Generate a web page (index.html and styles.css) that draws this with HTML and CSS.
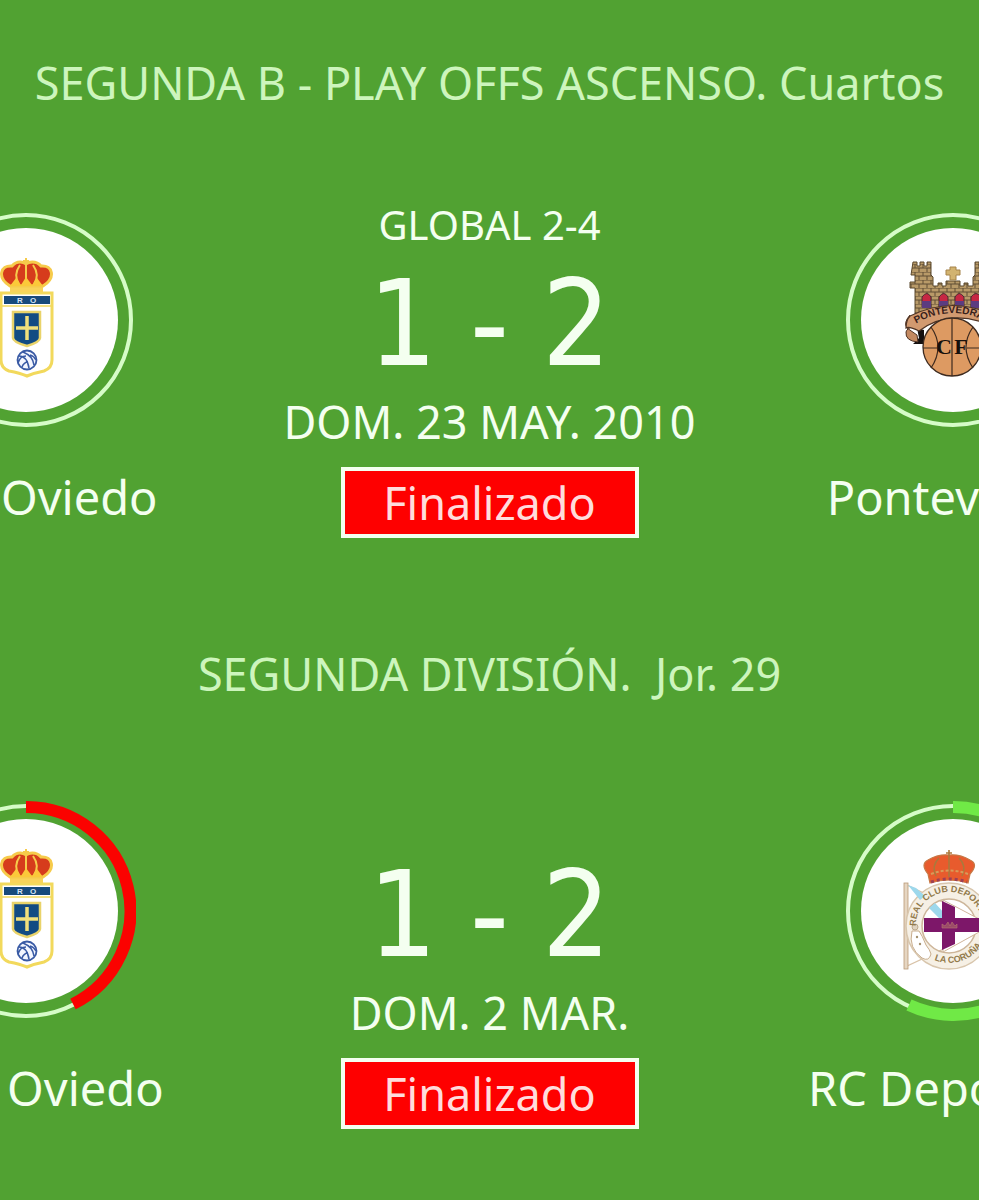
FILE: index.html
```html
<!DOCTYPE html>
<html lang="es">
<head>
  <meta charset="UTF-8">
  <meta name="viewport" content="width=device-width, initial-scale=1.0">
  <title>Resultados</title>
  <link rel="stylesheet" href="styles.css">
</head>
<body>

  <!-- Shared crest -->
  <svg class="defs" width="0" height="0" aria-hidden="true">
    <symbol id="oviedo" viewBox="-110 -110 220 220">
      <path d="M-25 -27H26V40Q26 48 18 51Q8 53 1 56Q-6 53 -17 51Q-25 48 -25 40Z" fill="#fff" stroke="#f2d95c" stroke-width="3"/>
      <path d="M-16 -37H17V-28H-16Z" fill="#f8d45a"/>
      <path d="M-16 -34C-29 -42 -26 -55 -14 -54C-9 -60 -2 -58 0 -56C2 -58 10 -60 15 -54C27 -55 30 -42 17 -34Z" fill="#d63c1c" stroke="#f6cb4b" stroke-width="3"/>
      <path d="M-6 -55Q-13 -45 -7 -36M7 -55Q14 -45 8 -36M0 -62V-36M-3 -59H3" fill="none" stroke="#f6cb4b" stroke-width="2"/>
      <path d="M-16 -34L-10 -42L-5 -35L0 -43L6 -35L11 -42L17 -34Z" fill="#fbc93a"/>
      <rect x="-22" y="-24" width="46" height="8" fill="#174a7c"/>
      <text x="-6" y="-17" class="crest-letter">R</text>
      <text x="7" y="-17" class="crest-letter">O</text>
      <path d="M-24 -14H25" stroke="#f2d95c" stroke-width="1.5"/>
      <path d="M-13 -8H14V18Q14 22 1 26Q-13 22 -13 18Z" fill="#124b83" stroke="#e9d36a" stroke-width="2.5"/>
      <path d="M1 -4V20M-10 8H12" stroke="#f1e07c" stroke-width="3.5"/>
      <circle cx="1" cy="40" r="9.5" fill="#f4f7ff" stroke="#3a5ba5" stroke-width="1.8"/>
      <path d="M-7 36Q1 36 3 48M-3 32Q7 36 8 45M-8 43Q-6 36 0 36M-4 47Q-2 42 2 42M4 35Q8 36 10 40" fill="none" stroke="#3a5ba5" stroke-width="1.6"/>
    </symbol>
  </svg>

  <main class="results">

    <section class="match">
      <h2 class="competition">SEGUNDA B - PLAY OFFS ASCENSO. Cuartos</h2>
      <div class="match-row">
        <div class="team">
          <svg class="crest" viewBox="-110 -110 220 220" role="img" aria-label="Real Oviedo">
            <circle class="ring" r="105"/>
            <circle class="disc" r="92"/>
            <use href="#oviedo" x="-110" y="-110" width="220" height="220"/>
          </svg>
          <p class="team-name">Real Oviedo</p>
        </div>

        <div class="info">
          <p class="aggregate">GLOBAL 2-4</p>
          <p class="score"><span>1</span><span>-</span><span>2</span></p>
          <p class="date">DOM. 23 MAY. 2010</p>
          <p class="status">Finalizado</p>
        </div>

        <div class="team">
          <svg class="crest" viewBox="-110 -110 220 220" role="img" aria-label="Pontevedra">
            <defs>
              <pattern id="stone" width="8" height="8" patternUnits="userSpaceOnUse">
                <rect width="8" height="8" fill="#b89a68"/>
                <path d="M0 0H8M0 4H8M2 0V4M6 4V8" stroke="#5f4d33" stroke-width="1"/>
              </pattern>
              <path id="ribbon-line" d="M-38 4Q0 -18 38 4"/>
            </defs>
            <circle class="ring" r="105"/>
            <circle class="disc" r="92"/>
            <!-- castle -->
            <path d="M-42 -45L-40 -58H-36V-54H-33V-58H-29V-54H-26V-58H-22V-45L-20 -43V-34H-15V-37H-11V-34H-7V-39H7V-34H11V-37H15V-34H20V-43L22 -45V-58H26V-54H29V-58H33V-54H36V-58H40L42 -45L40 -6H-38V-32H-43V-38H-38V-45Z" fill="url(#stone)" stroke="#5b482c" stroke-width="1"/>
            <path d="M-3 -53H3V-50H7V-45H3V-40H-3V-45H-7V-50H-3Z" fill="#d2b36f" stroke="#a5834a"/>
            <path d="M-31 -13V-23Q-26 -30 -22 -23V-13ZM-14 -13V-23Q-9 -30 -5 -23V-13ZM2 -13V-23Q6 -30 11 -23V-13ZM18 -13V-23Q23 -30 28 -23V-13Z" fill="#c62743" stroke="#4a2c31"/>
            <path d="M-31 -19H-22V-12H-31ZM-14 -19H-5V-12H-14ZM2 -19H11V-12H2ZM18 -19H28V-12H18Z" fill="#5b3c80"/>
            <!-- ribbon -->
            <path d="M-36 8L-29 10V24H-40L-34 18Z" fill="#151010"/>
            <path d="M-43 -5Q-50 3 -46 8L-36 15L-35 22Q-48 21 -47 12Q-46 8 -40 7" fill="#c48a61" stroke="#4f3425"/>
            <path d="M-43 -4Q0 -25 43 -4L46 9Q0 -14 -34 11Q-44 6 -47 8Q-47 0 -43 -4Z" fill="#d29a70" stroke="#4f3425" stroke-width="1.2"/>
            <text class="ribbon-text"><textPath href="#ribbon-line" startOffset="1">PONTEVEDRA</textPath></text>
            <!-- ball -->
            <circle cx="-1" cy="27" r="29" fill="#dd9a62" stroke="#3d2a1f" stroke-width="1.3"/>
            <path d="M-1 -2V56M-30 28H-16M14 28H28M-22 7Q-8 27 -22 48M20 7Q6 27 20 48" fill="none" stroke="#3d2a1f" stroke-width="1.2"/>
            <text x="-9" y="34" class="ball-letter">C</text>
            <text x="8" y="34" class="ball-letter">F</text>
          </svg>
          <p class="team-name">Pontevedra</p>
        </div>
      </div>
    </section>

    <section class="match">
      <h2 class="competition">SEGUNDA DIVISIÓN.&nbsp; Jor. 29</h2>
      <div class="match-row">
        <div class="team">
          <svg class="crest" viewBox="-110 -110 220 220" role="img" aria-label="Real Oviedo">
            <circle class="ring" r="105"/>
            <path class="arc arc-lost" d="M0 -104A104 104 0 0 1 47 93"/>
            <circle class="disc" r="92"/>
            <use href="#oviedo" x="-110" y="-110" width="220" height="220"/>
          </svg>
          <p class="team-name">Real&nbsp; Oviedo</p>
        </div>

        <div class="info">
          <p class="aggregate"></p>
          <p class="score"><span>1</span><span>-</span><span>2</span></p>
          <p class="date">DOM. 2 MAR.</p>
          <p class="status">Finalizado</p>
        </div>

        <div class="team">
          <svg class="crest" viewBox="-110 -110 220 220" role="img" aria-label="RC Deportivo">
            <defs>
              <path id="club-top" d="M-36 22A33 33 0 1 1 28 22"/>
              <path id="club-bottom" d="M-38 32A39 39 0 0 0 30 32"/>
            </defs>
            <circle class="ring" r="105"/>
            <path class="arc arc-won" d="M0 -104A104 104 0 1 1 -44 94"/>
            <circle class="disc" r="92"/>
            <!-- flag -->
            <path d="M-46 -26L40 15L-46 55Z" fill="#fff" stroke="#d9c3a8" stroke-width="1.2"/>
            <rect x="-49" y="-28" width="4" height="86" fill="#e6d6c2" stroke="#b99a77" stroke-width=".8"/>
            <!-- round badge -->
            <circle cx="-4" cy="15" r="35" fill="none" stroke="#f6f0e5" stroke-width="16"/>
            <circle cx="-4" cy="15" r="43" fill="none" stroke="#d8c6ad" stroke-width="1.5"/>
            <circle cx="-4" cy="15" r="27" fill="none" stroke="#cdb69a" stroke-width="1.5"/>
            <path d="M-45 -26L-37 -23L-28 -15L-33 -11ZM-24 -3L-18 -8L-8 3L-12 9Z" fill="#9dd8ec"/>
            <path d="M-10 -11L28 9V20L-10 41Z" fill="#fff" stroke="#d0b59b" stroke-width="1"/>
            <path d="M-11 -10L2 -4V33L-11 39ZM-29 7H30V21H-29Z" fill="#7d1769"/>
            <path d="M-11 17V13L-8 15L-5 11L-3 15L-1 11L2 15L4 13V17Z" fill="#9b4b68" stroke="#b8786f" stroke-width=".6"/>
            <path d="M-41 20Q-45 37 -31 47Q-24 51 -22 43Q-23 39 -27 34Q-31 24 -34 20Z" fill="#fff" stroke="#c8ad8d" stroke-width="1"/>
            <circle cx="-38" cy="16" r="3" fill="#dfd3c0" stroke="#bda88b"/>
            <circle cx="-36" cy="26" r="1.2" fill="#a4916f"/>
            <circle cx="-33" cy="33" r="1.2" fill="#a4916f"/>
            <text class="club-text"><textPath href="#club-top" startOffset="7">REAL CLUB DEPORTIVO</textPath></text>
            <text class="club-text"><textPath href="#club-bottom" startOffset="26">LA CORUÑA</textPath></text>
            <!-- crown -->
            <path d="M-23 -28L-25 -37Q-33 -47 -25 -51Q-15 -57 -4 -56Q7 -57 17 -51Q26 -47 17 -37L15 -28Q-4 -34 -23 -28Z" fill="#e85b2d" stroke="#c77845" stroke-width="1.2"/>
            <path d="M-14 -53Q-22 -45 -17 -35M6 -53Q14 -45 9 -35M-4 -61V-34M-7 -58H-1" fill="none" stroke="#aa793c" stroke-width="1.6"/>
            <path d="M-22 -37Q-4 -44 15 -37" fill="none" stroke="#d79b59" stroke-width="2" stroke-dasharray="3 2"/>
            <path d="M-22 -29Q-4 -35 14 -29" fill="none" stroke="#9d4055" stroke-width="3" stroke-dasharray="3 3"/>
          </svg>
          <p class="team-name">RC Deportivo</p>
        </div>
      </div>
    </section>

  </main>

</body>
</html>
```
FILE: styles.css
```css
* {
  box-sizing: border-box;
}

body {
  margin: 0;
  background-color: #fff;
  font-family: "Noto Sans", "Open Sans", sans-serif;
  color: #f4fff0;
}

h2,
p {
  margin: 0;
  font-weight: 400;
  white-space: nowrap;
}

.defs {
  position: absolute;
}

.results {
  min-height: 100vh;
  margin-right: 2px;
  background-color: #51a232;
  overflow: hidden;
}

.match {
  padding: 53px 0;
}

.competition {
  font-size: 45px;
  line-height: 60px;
  text-align: center;
  color: #cdf5bd;
}

/* The outer teams run past both edges of the screen */
.match-row {
  display: flex;
  justify-content: space-between;
  margin: 88px -154px 0;
}

.team {
  flex: 0 0 360px;
  display: flex;
  flex-direction: column;
  align-items: center;
  padding-top: 9px;
}

.crest {
  width: 220px;
  height: 220px;
}

.team-name {
  margin-top: 37px;
  font-size: 47px;
  line-height: 60px;
}

.info {
  display: flex;
  flex-direction: column;
  align-items: center;
}

.aggregate {
  height: 48px;
  font-size: 40px;
  line-height: 48px;
}

.score {
  display: flex;
  gap: 33px;
  margin-top: 15px;
  font-family: "DejaVu Sans Condensed", "DejaVu Sans", sans-serif;
  font-size: 120px;
  line-height: 120px;
}

.date {
  margin-top: 8px;
  font-size: 45px;
  line-height: 60px;
}

.status {
  width: 298px;
  margin-top: 15px;
  border: 4px solid #f4fff0;
  background-color: #fe0000;
  color: #ffdcdc;
  font-size: 45px;
  line-height: 63px;
  text-align: center;
}

.ring {
  fill: none;
  stroke: #d6fcc8;
  stroke-width: 4;
}

.disc {
  fill: #fff;
}

.arc {
  fill: none;
  stroke-width: 12;
}

.arc-lost {
  stroke: #fb0200;
}

.arc-won {
  stroke: #70e946;
}

.crest-letter {
  font: bold 8px "Liberation Sans", sans-serif;
  fill: #d5e3f3;
  text-anchor: middle;
}

.ribbon-text {
  font: bold 10px "Liberation Sans", sans-serif;
  fill: #37201a;
}

.ball-letter {
  font: bold 22px "Liberation Serif", serif;
  fill: #17100c;
  text-anchor: middle;
}

.club-text {
  font: bold 9px "Liberation Sans", sans-serif;
  fill: #927a4b;
}
```
